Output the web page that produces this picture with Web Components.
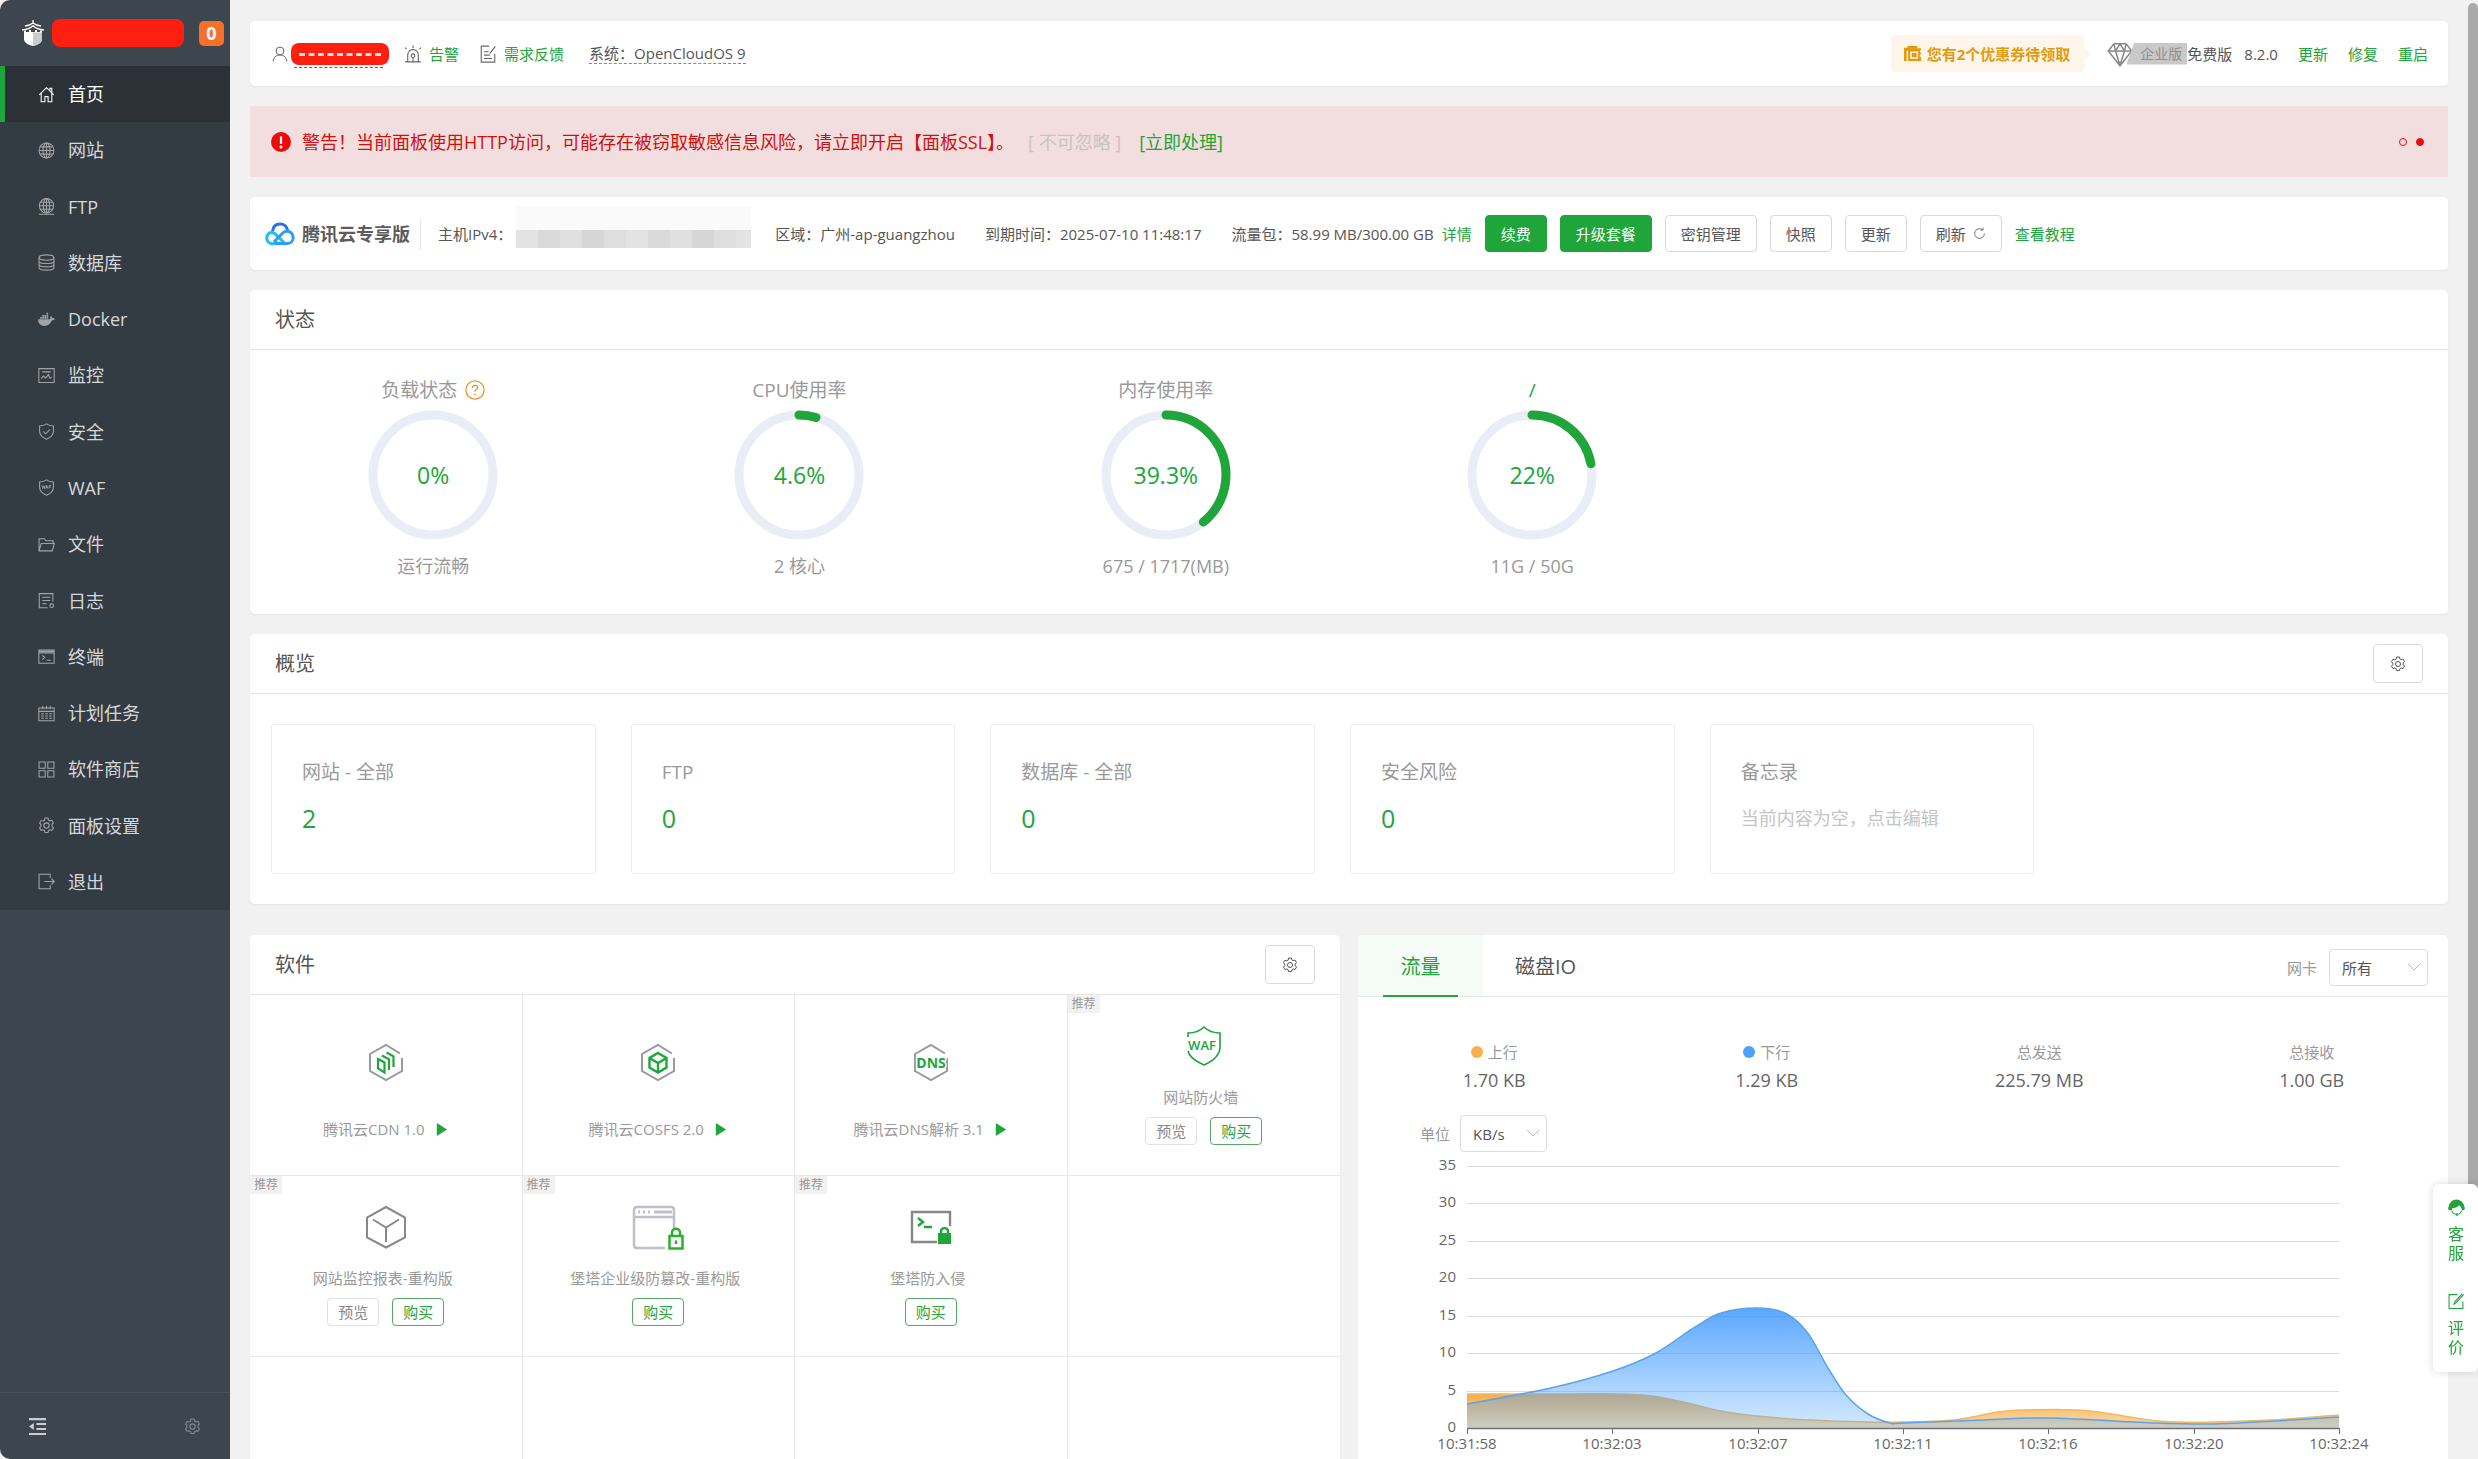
<!DOCTYPE html>
<html lang="zh-CN">
<head>
<meta charset="utf-8">
<meta name="viewport" content="width=device-width, initial-scale=1">
<title>首页</title>
<style>
  html, body { height: 100%; margin: 0; }
  body {
    --green: #20a53a; --line: #e8e8e8; --muted: #999; --text: #555;
    background: #f1f1f1; color: var(--text); overflow: hidden;
    font: 15px/24px "Open Sans", "Noto Sans CJK SC", sans-serif;
  }
</style>
</head>
<body>
<bt-app></bt-app>
<script>
const BASE = `
  *, *::before, *::after { box-sizing: border-box; }
  :host { display: block; }
  :host([hidden]) { display: none; }
  a { color: var(--green); text-decoration: none; }
  button, select { font: inherit; color: inherit; margin: 0; }
  svg { display: block; }
`;
function define(name, css, html) {
  customElements.define(name, class extends HTMLElement {
    constructor() { super(); this.attachShadow({ mode: 'open' }); }
    connectedCallback() {
      if (this.shadowRoot.childNodes.length) return;
      const body = typeof html === 'function' ? html(this) : html;
      this.shadowRoot.innerHTML = `<style>${BASE}${css}</style>${body}`;
    }
  });
}

/* ---------- icons, all on a 16 unit square unless a box is given ---------- */
const gearPath = 'M6.6 1h2.8l.5 1.9 1.3.7 1.9-.5 1.4 2.4-1.3 1.4v1.8l1.3 1.4-1.4 2.4-1.9-.5-1.3.7-.5 1.9H6.6l-.5-1.9-1.3-.7-1.9.5-1.4-2.4 1.3-1.4V7.1L1.5 5.7l1.4-2.4 1.9.5 1.3-.7z';
const hexPath = 'M35 12.5 21 4 5 13v17l16 9 16-9V17';
const ICONS = {
  home: '<path d="M1.200 8.400 8 1.600l6.800 6.800M3 7v7.800h3.500V10h3v4.800H13V7M11.200 4.600V2.200H13v4.200"/>',
  globe: '<circle cx="8" cy="8" r="7"/><ellipse cx="8" cy="8" rx="3.300" ry="7"/><path d="M8 1v14M1 8h14M2.300 4.600h11.400M2.300 11.400h11.400"/>',
  ftp: '<circle cx="8" cy="7.300" r="6.700"/><ellipse cx="8" cy="7.300" rx="3" ry="6.700"/><path d="M1.300 7.300h13.400M8 .6v13.400M2.500 4h11M2.500 10.600h11M.8 15.300h14.400"/>',
  db: '<ellipse cx="8" cy="3.300" rx="7" ry="2.500"/><path d="M1 3.300v9.400c0 1.400 3.100 2.500 7 2.500s7-1.100 7-2.500V3.300M1 6.500C1 7.900 4.100 9 8 9s7-1.100 7-2.500M1 9.600c0 1.400 3.100 2.500 7 2.500s7-1.100 7-2.500"/>',
  docker: '<path fill="currentColor" stroke="none" d="M.2 7.800h11.100c.6-.5.5-1.500.1-2.200l.7-.8c.9.600 1.200 1.300 1.200 2 .8-.2 1.700-.1 2.700.4-.5 1-1.500 1.400-2.800 1.400-1.300 3.300-3.900 5.400-7.400 5.400C2.300 14 0 11.500.2 7.800zM2 5.700h1.600v1.600H2zM4 5.700h1.600v1.600H4zM6 5.700h1.600v1.600H6zM8 5.700h1.600v1.600H8zM4 3.700h1.600v1.600H4zM6 3.700h1.600v1.600H6zM8 3.700h1.600v1.600H8zM8 1.700h1.600v1.600H8z"/>',
  monitor: '<path d="M.8 1.500h14.400v13H.8zM4 4.600h8M3 11l2.300-2.500 2 1.800L9.800 7l1.500 3.500L13 9.500"/>',
  shield: '<path d="M8 .8c1.900 1.300 4 1.900 6.500 2v5c0 3.500-2.600 5.800-6.500 7.500-3.900-1.700-6.500-4-6.500-7.500v-5c2.500-.1 4.600-.7 6.500-2zM5 8l2.200 2.200 3.900-3.900"/>',
  waf: '<path d="M8 .8c1.900 1.300 4 1.900 6.500 2v5c0 3.500-2.600 5.800-6.500 7.500-3.900-1.700-6.500-4-6.500-7.500v-5c2.500-.1 4.600-.7 6.500-2z"/><path d="M3.600 6l.8 3 .8-2.500L6 9l.8-3M7.300 9l1-3 1 3M7.600 8.200h1.500M10.500 9V6.200h2M10.500 7.600h1.600" stroke-width=".8"/>',
  folder: '<path d="M1 14V2.500h5l1.500 2h6.700V7M1 14h12.500L15.300 7H3z"/>',
  log: '<path d="M14 9V1.500H1.200v13.300H9M4 5h7.500M4 8h7.500M4 11h4"/><circle cx="12.900" cy="12.900" r="1.700"/>',
  term: '<path d="M.8 1.800h14.400v12.600H.8zM.8 4.600h14.400M.8 3.200h14.400M4 7l2.300 2L4 11M8 11.500h4"/>',
  calendar: '<path d="M.8 2.800h14.400v12H.8zM.8 6h14.400M4.500 1V4M11.500 1V4M8 1V4M3 8.300h2.500M3 10.300h2.500M3 12.400h2.500M6.800 8.300h2.500M6.800 10.300h2.500M6.800 12.400h2.500M10.500 8.300H13M10.500 10.300H13M10.500 12.400H13"/>',
  apps: '<path d="M1 1h5.800v5.800H1zM9.200 1H15v5.800H9.200zM1 9.200h5.800V15H1zM9.200 9.200H15V15H9.200z"/>',
  gear: `<path d="${gearPath}"/><circle cx="8" cy="8" r="2.500"/>`,
  exit: '<path d="M11.500 4.500V1.200H1v13.600h10.500v-3.300M6 8h9.300M12.600 5.300 15.300 8l-2.700 2.700"/>',
  collapse: '<path fill="currentColor" stroke="none" d="M0 0h16v2H0zM7 4.700h9v1.800H7zM7 9.400h9v1.800H7zM0 14h16v2H0zM0 8l4.500-3.400v6.800z"/>',
  user: '<circle cx="8" cy="5" r="3.900"/><path d="M1.200 15.500C1.500 11.500 4 9 8 9s6.500 2.500 6.800 6.500"/>',
  siren: '<path d="M3.300 14.500V8.800a4.700 4.700 0 0 1 9.400 0v5.700M1 15h14M8 2.800V.5M2.300 3.600 1 2.300M13.700 3.600 15 2.300M8 11.500v3"/><circle cx="8" cy="9.500" r="1.600"/>',
  note: '<path d="M9 1H2v14.200h12V8M4.500 6h4M4.500 9h5M4.500 12h7M14.500 1.200 9.500 7.600"/>',
  coupon: '<path fill="currentColor" stroke="none" fill-rule="evenodd" d="M0 2.500h3.300V1H13l-1 2h4v2h-1v2h1v2h-1v2h1v4H3.800V5.500H2.500V15H0zM5.800 6v7h7.500V6zM7.300 7.500H12v4H7.300z"/>',
  diamond: '<path d="M4 1.200h8L15.800 6 8 15.800.2 6zM.2 6h15.600M4 1.200 5 6l3 9.500L11 6l1-4.800M5 6l3-4.800L11 6"/>',
  refresh: '<path d="M14 8A6 6 0 1 1 11.500 3.200M9.200 3.800h3.200V.8"/>',
  edit: '<path d="M9 1.500H1v13h13V8M14.800 1.200 7.500 9.300l-1.800 1.200.7-2.200L13.300.8"/>',
  headset: '<path fill="currentColor" stroke="none" d="M8 .5a7.200 7.200 0 0 1 7.200 6.600c.9.700.9 3-.4 3.600h-1.600c-.2-2.200-1.200-3.600-2.700-4.800-1.700 1.900-4.200 2.700-6.500 2.800l-.4 2H1.200C-.1 10.100-.1 7.800.8 7.100A7.200 7.200 0 0 1 8 .5z"/><path d="M3.500 11c.8 2.200 2.400 3.500 4.500 3.500M12.800 11c-.5 1.500-1.500 2.700-2.800 3.300"/><circle cx="8.500" cy="14.500" r="1.200" fill="currentColor" stroke="none"/>',
  alert: '<circle cx="8" cy="8" r="8" fill="#ee0a0a" stroke="none"/><path d="M8 3.500v6" stroke="#fff" stroke-width="1.800"/><circle cx="8" cy="12" r="1.200" fill="#fff" stroke="none"/>',
  help: '<circle cx="8" cy="8" r="7.300"/><path d="M5.900 6.300c0-1.300.9-2.100 2.100-2.100s2.100.8 2.100 1.900c0 1.500-2.100 1.600-2.100 3.200"/><circle cx="8" cy="11.500" r=".7" fill="currentColor" stroke="none"/>',
  play: '<path fill="currentColor" stroke="none" d="M3 1l11 7-11 7z"/>',
  tower: ['0 0 24 26', '<g stroke="#fff" stroke-width="1.300"><path d="M12 0v4M4 6c3.500-.4 6-1.300 8-3 2 1.700 4.500 2.600 8 3M1 10c5-.4 8.500-1.800 11-4.200 2.500 2.400 6 3.800 11 4.200"/></g><path fill="#fff" stroke="none" d="M3 10.500h2V12h3v-2h2v2h4v-2h2v2h3v-1.500h2V19c0 3.500-4 6-9 7-5-1-9-3.500-9-7z"/><path fill="#c9cdd1" stroke="none" d="M12 12.500h9V19c0 3.500-4 6-9 7z"/>'],
  cloud: ['0 0 30 24', '<g stroke-width="3"><path stroke="#2b6ff2" d="M7.500 9.500C8 4.500 11 2 15 2s7 2.500 7.500 6.500"/><path stroke="#1fc0e4" d="M20 21.500 9.500 11.300C4.500 9 1.800 12.500 1.800 16s2.700 5.700 6 5.700c2 0 3.400-.7 4.700-2"/><path stroke="#2f9df5" d="M10 21.500h12.500c3.300 0 5.700-2.500 5.700-6s-2.700-6.200-6-6.200c-2 0-3.500.7-4.700 1.900L9 20"/></g>'],
  cdn: ['0 0 42 42', `<path stroke="#999" stroke-width="2" d="${hexPath}"/><path stroke="#20a53a" stroke-width="2.200" d="M13 18l6.500 3.500V31.500L13 27.500zM17 14.500l7 3.800V29M21.500 11.500l7 3.800V26"/>`],
  cosfs: ['0 0 42 42', `<path stroke="#999" stroke-width="2" d="${hexPath}"/><path stroke="#20a53a" stroke-width="2.400" d="M21 12l8.500 5v9.500L21 31.500l-8.500-5V17zM12.500 17l8.500 5 8.500-5M21 22v9.500"/>`],
  dns: ['0 0 42 42', `<path stroke="#999" stroke-width="2" d="${hexPath}"/><text x="21" y="26.500" text-anchor="middle" font-size="14" font-weight="700" fill="#20a53a" stroke="#fff" stroke-width="3" paint-order="stroke">DNS</text>`],
  wafbig: ['0 0 42 42', '<path stroke="#20a53a" stroke-width="1.600" d="M5 12V8c6 0 12-2 16-6 4 4 10 6 16 6v14c0 9-7 14-16 18C12 36 6 32 5 26"/><text x="19" y="24.500" text-anchor="middle" font-size="13" font-weight="600" fill="#20a53a" stroke="#fff" stroke-width="3" paint-order="stroke">WAF</text>'],
  cube: ['0 0 42 42', '<path stroke="#888" stroke-width="2" d="M21 1l19 10.500v20L21 41.500 2 31.500v-20zM8 13.500l13 8 13-8M21 21.500V36"/>'],
  tamper: ['0 0 52 44', '<g stroke="#bfbfcb" stroke-width="2.500"><path d="M33 42H5c-2 0-3-1-3-3V4c0-2 1-3 3-3h34c2 0 3 1 3 3v19M2 11h40"/><path d="M6 6h2M11 6h2M16 6h2M22 6h18" stroke-width="3"/></g><g stroke="#2eae2e" stroke-width="2.500"><path fill="#fff" d="M37.500 30h13v12.500h-13z"/><path d="M40 30v-3.500c0-5 8-5 8 0V30M44 34.500v3.500"/></g>'],
  intrude: ['0 0 42 42', '<path stroke="#888" stroke-width="2.400" d="M27 36H2V6h38v14"/><path stroke="#20a53a" stroke-width="2.400" d="M8 12l5 4-5 4M14 21h8"/><path fill="#20a53a" stroke="none" d="M28 27h13v11H28z"/><path stroke="#20a53a" stroke-width="2.400" d="M31 28v-2.500c0-4.500 7-4.500 7 0V28"/>'],
};
define('bt-icon', `
  :host { flex: none; width: 16px; height: 16px; }
  svg { width: 100%; height: 100%; overflow: visible; }`,
  el => {
    const def = ICONS[el.getAttribute('name')];
    const [box, art] = Array.isArray(def) ? def : ['0 0 16 16', def];
    return `<svg viewBox="${box}" fill="none" stroke="currentColor" stroke-width="1" aria-hidden="true">${art}</svg>`;
  });

/* ---------- controls ---------- */
define('bt-button', `
  button { height: 37px; padding: 0 15px; border: 1px solid #d9d9d9; border-radius: 4px; background: #fff; display: flex; align-items: center; gap: 7px; color: #555; white-space: nowrap; }
  :host([kind=primary]) button { background: var(--green); border-color: var(--green); color: #fff; }
  :host([kind=square]) button { width: 50px; height: 39px; padding: 0; justify-content: center; }
  :host([kind=small]) button, :host([kind=buy]) button { height: 28px; padding: 0 10px; color: #888; border-color: #e0e0e0; }
  :host([kind=buy]) button { color: var(--green); border-color: #55a868; }`,
  el => `<button type="button" aria-label="${el.getAttribute('label') || el.textContent.trim()}"><slot></slot></button>`);

define('bt-select', `
  :host { display: flex; align-items: center; gap: 10px; color: var(--muted); }
  span { position: relative; display: block; }
  select { appearance: none; height: 37px; width: var(--w, 99px); padding: 0 12px; border: 1px solid #dcdcdc; border-radius: 4px; background: #fff; color: #555; }
  svg { position: absolute; right: 7px; top: 12px; width: 14px; height: 12px; pointer-events: none; }`,
  el => `<label for="s">${el.getAttribute('label')}</label><span><select id="s"><option>${el.getAttribute('value')}</option></select>
    <svg viewBox="0 0 14 12" fill="none" stroke="#bbb"><path d="M1 3l6 6 6-6"/></svg></span>`);

/* ---------- sidebar ---------- */
define('bt-nav-item', `
  a { display: flex; align-items: center; height: 100%; gap: 13px; padding-left: 38px; color: #d5d8da; font-size: 18px; }
  bt-icon { color: #a0a4a7; width: 17px; height: 17px; }
  :host([active]) a { background: #2c3138; color: #fff; padding-left: 33px; border-left: 5px solid var(--green); }
  :host([active]) bt-icon { color: #fff; }`,
  el => `<a href="#"><bt-icon name="${el.getAttribute('icon')}"></bt-icon><slot></slot></a>`);

const NAV = [['home','首页'],['globe','网站'],['ftp','FTP'],['db','数据库'],['docker','Docker'],['monitor','监控'],['shield','安全'],['waf','WAF'],['folder','文件'],['log','日志'],['term','终端'],['calendar','计划任务'],['apps','软件商店'],['gear','面板设置'],['exit','退出']];
define('bt-sidebar', `
  :host { display: flex; flex-direction: column; background: #3d454e; border-radius: 10px 0 0 10px; }
  header { height: 66px; display: flex; align-items: center; padding: 0 6px 0 21px; }
  .logo { width: 24px; height: 26px; }
  .name { width: 132px; height: 28px; margin-left: 7px; border-radius: 8px; background: #ff1f10; }
  .badge { margin-left: auto; width: 25px; height: 25px; border-radius: 5px; background: #f7702b; color: #fff; font-weight: 700; font-size: 18px; text-align: center; }
  nav { display: grid; grid-auto-rows: 1fr; height: 844px; background: #343c43; }
  footer { margin-top: auto; height: 67px; border-top: 1px solid #48505a; padding: 0 29px; display: flex; align-items: center; justify-content: space-between; color: #c9ced4; }
  footer bt-icon { width: 17px; height: 17px; }
  footer bt-icon + bt-icon { color: #868c92; }`,
  `<header><bt-icon class="logo" name="tower"></bt-icon><div class="name"></div><div class="badge">0</div></header>
   <nav>${NAV.map(([i, t], n) => `<bt-nav-item icon="${i}"${n ? '' : ' active'}>${t}</bt-nav-item>`).join('')}</nav>
   <footer><bt-icon name="collapse"></bt-icon><bt-icon name="gear"></bt-icon></footer>`);

/* ---------- panels ---------- */
define('bt-panel', `
  :host { background: #fff; border-radius: 5px; box-shadow: 0 1px 2px #0000000d; }
  header { height: 60px; padding: 0 25px; display: flex; align-items: center; justify-content: space-between; border-bottom: 1px solid var(--line); }
  h2 { margin: 0; font-size: 20px; font-weight: 400; color: #555; }`,
  el => `<header><h2>${el.getAttribute('heading')}</h2><slot name="tool"></slot></header><slot></slot>`);

define('bt-topbar', `
  :host { display: flex; align-items: center; height: 65px; padding: 0 20px 0 22px; background: #fff; border-radius: 5px; box-shadow: 0 1px 2px #0000000d; white-space: nowrap; color: #555; }
  .group { display: flex; align-items: center; }
  .left > * + *, .links > * + * { margin-left: 20px; }
  .left bt-icon { color: #666; width: 18px; height: 18px; margin-right: 7px; }
  .left .user bt-icon { margin-right: 3px; width: 16px; }
  .mask { width: 98px; height: 22px; border-radius: 8px; background: #ff1f10; position: relative; }
  .mask::before { content: ""; position: absolute; left: 8px; right: 8px; top: 10px; border-top: 3px dashed #ffe0da; }
  .mask::after { content: ""; position: absolute; left: 3px; right: 6px; bottom: -3px; border-bottom: 1px dashed #4f7a35; }
  .user.group { margin-right: -5px; }
  .sys { display: block; line-height: 19px; border-bottom: 1px dashed #888; margin-left: 25px; }
  .right { margin-left: auto; }
  .coupon { position: relative; height: 37px; padding: 0 14px 0 13px; gap: 6px; background: #fef6ea; border-radius: 4px; color: #e39a10; font-weight: 700; }
  .coupon::after { content: ""; position: absolute; left: 100%; top: 12px; border: 7px solid transparent; border-left-color: #fef6ea; }
  .coupon bt-icon { width: 17px; height: 17px; }
  .plan { margin: 0 20px 0 22px; }
  .plan bt-icon { width: 28px; height: 24px; color: #888; }
  .tag { height: 22px; line-height: 22px; padding: 0 5px 0 14px; margin-left: -8px; font-size: 14px; color: #8f8f8f; background: #c9c9c9; clip-path: polygon(8px 0, 100% 0, 100% 100%, 0 100%); }
  .ver { margin-left: 12px; }`,
  `<div class="group left">
     <span class="group user"><bt-icon name="user"></bt-icon><span class="mask"></span></span>
     <a class="group" href="#"><bt-icon name="siren"></bt-icon>告警</a>
     <a class="group" href="#"><bt-icon name="note"></bt-icon>需求反馈</a>
     <span class="sys">系统：OpenCloudOS 9</span>
   </div>
   <div class="group right">
     <a class="group coupon" href="#"><bt-icon name="coupon"></bt-icon>您有2个优惠券待领取</a>
     <span class="group plan"><bt-icon name="diamond"></bt-icon><span class="tag">企业版</span><span>免费版</span><span class="ver">8.2.0</span></span>
     <span class="group links"><a href="#">更新</a><a href="#">修复</a><a href="#">重启</a></span>
   </div>`);

define('bt-warning', `
  :host { display: flex; align-items: center; height: 71px; padding: 0 24px 0 21px; background: #f2dede; color: #d0100f; font-size: 18px; white-space: nowrap; }
  bt-icon { width: 20px; height: 20px; margin-right: 11px; }
  .ignore { color: #c9c2c2; margin: 0 18px 0 14px; }
  .dots { margin-left: auto; display: flex; gap: 9px; }
  .dots i { width: 8px; height: 8px; border: 1px solid #ee0a0a; border-radius: 50%; }
  .dots i + i { background: #ee0a0a; }`,
  `<bt-icon name="alert"></bt-icon><span>警告！当前面板使用HTTP访问，可能存在被窃取敏感信息风险，请立即开启【面板SSL】。</span>
   <span class="ignore">[ 不可忽略 ]</span><a href="#">[立即处理]</a><span class="dots"><i></i><i></i></span>`);

define('bt-cloudbar', `
  :host { display: flex; align-items: center; height: 73px; padding: 0 15px; background: #fff; border-radius: 5px; box-shadow: 0 1px 2px #0000000d; white-space: nowrap; color: #555; }
  .logo { width: 30px; height: 24px; margin-right: 7px; }
  b { font-size: 18px; padding-right: 10px; margin-right: 17px; line-height: 32px; border-right: 1px solid #e6e6e6; color: #5c5c5c; }
  .mask { width: 235px; height: 42px; margin: 9px 24px 0 4px; align-self: flex-start; padding-top: 24px; background: #fafafa; }
  .mask::after { content: ""; display: block; height: 18px; background: repeating-linear-gradient(90deg, #e3e3e3 0 22px, #dadada 22px 44px, #e0e0e0 44px 66px, #d6d6d6 66px 88px, #dedede 88px 110px); }
  .item { margin-right: 30px; }
  .flow { margin-right: 8px; }
  .buttons { display: flex; align-items: center; gap: 13px; margin-left: 13px; }
  .buttons bt-icon { width: 13px; height: 13px; }`,
  `<bt-icon class="logo" name="cloud"></bt-icon><b>腾讯云专享版</b>
   <span>主机IPv4：</span><span class="mask"></span>
   <span class="item">区域：广州-ap-guangzhou</span><span class="item">到期时间：2025-07-10 11:48:17</span>
   <span class="flow">流量包：58.99 MB/300.00 GB</span><a href="#">详情</a>
   <div class="buttons"><bt-button kind="primary">续费</bt-button><bt-button kind="primary">升级套餐</bt-button><bt-button>密钥管理</bt-button><bt-button>快照</bt-button><bt-button>更新</bt-button><bt-button>刷新 <bt-icon name="refresh"></bt-icon></bt-button><a href="#">查看教程</a></div>`);

define('bt-gauge', `
  :host { display: flex; flex-direction: column; align-items: center; font-size: 18px; color: var(--muted); }
  .title { display: flex; align-items: center; height: 26px; gap: 8px; font-size: 19px; }
  .ring { display: grid; place-items: center; margin: 7px 0 14px; }
  .ring > * { grid-area: 1 / 1; }
  svg { width: 130px; height: 130px; }
  .val { color: var(--green); font-size: 23px; line-height: 30px; }
  ::slotted(a) { color: var(--green); text-decoration: none; }
  ::slotted(bt-icon) { width: 20px; height: 20px; color: #e8962c; }`,
  el => {
    const v = +el.getAttribute('value');
    return `<div class="title"><slot></slot></div><div class="ring"><svg viewBox="0 0 130 130" fill="none">
      <circle cx="65" cy="65" r="60" stroke="#eaedf6" stroke-width="9"/>
      ${v ? `<circle cx="65" cy="65" r="60" stroke="#20a53a" stroke-width="9" stroke-linecap="round" pathLength="100" stroke-dasharray="${v} 100" transform="rotate(-90 65 65)"/>` : ''}
      </svg><span class="val">${v}%</span></div><div>${el.getAttribute('note')}</div>`;
  });

define('bt-stat', `
  :host { border: 1px solid #ececec; border-radius: 3px; height: 150px; padding: 33px 30px; }
  h3 { margin: 0; font-weight: 400; font-size: 19px; line-height: 28px; color: var(--muted); }
  .v { margin-top: 15px; font-size: 25px; line-height: 34px; color: var(--green); }
  :host([memo]) .v { font-size: 18px; color: #c4c4c4; }`,
  el => `<h3>${el.getAttribute('heading')}</h3><div class="v"><slot></slot></div>`);

define('bt-app-tile', `
  :host { position: relative; display: flex; flex-direction: column; align-items: center; height: 181px; padding-top: 46px; border-right: 1px solid var(--line); border-bottom: 1px solid var(--line); color: var(--muted); }
  .ico { width: 42px; height: 42px; }
  .wide { width: 52px; height: 44px; }
  .name { display: flex; align-items: center; gap: 9px; margin-top: 34px; }
  .name bt-icon { color: var(--green); width: 15px; height: 15px; }
  :host([tag]) { padding-top: 30px; }
  :host([tag]) .name { margin-top: 18px; padding-right: 6px; }
  :host([tag]) .wide { margin-bottom: -2px; }
  .tag { position: absolute; left: 0; top: 0; padding: 0 4px; line-height: 18px; font-size: 12px; background: #f1f1f1; }
  .act { display: flex; gap: 13px; margin-top: 8px; }`,
  el => {
    const icon = el.getAttribute('icon'), tag = el.getAttribute('tag');
    if (!icon) return '';
    return `${tag ? `<span class="tag">${tag}</span>` : ''}<bt-icon class="ico${icon === 'tamper' ? ' wide' : ''}" name="${icon}"></bt-icon>
      <div class="name"><span>${el.getAttribute('name')}</span>${tag ? '' : '<bt-icon name="play"></bt-icon>'}</div><div class="act"><slot></slot></div>`;
  });

define('bt-software', `
  .grid { display: grid; grid-template-columns: repeat(4, 1fr); }
  bt-app-tile:nth-child(4n) { border-right: 0; }`,
  `<bt-panel heading="软件"><bt-button slot="tool" kind="square" label="设置"><bt-icon name="gear"></bt-icon></bt-button>
   <div class="grid">
    <bt-app-tile icon="cdn" name="腾讯云CDN 1.0"></bt-app-tile>
    <bt-app-tile icon="cosfs" name="腾讯云COSFS 2.0"></bt-app-tile>
    <bt-app-tile icon="dns" name="腾讯云DNS解析 3.1"></bt-app-tile>
    <bt-app-tile icon="wafbig" name="网站防火墙" tag="推荐"><bt-button kind="small">预览</bt-button><bt-button kind="buy">购买</bt-button></bt-app-tile>
    <bt-app-tile icon="cube" name="网站监控报表-重构版" tag="推荐"><bt-button kind="small">预览</bt-button><bt-button kind="buy">购买</bt-button></bt-app-tile>
    <bt-app-tile icon="tamper" name="堡塔企业级防篡改-重构版" tag="推荐"><bt-button kind="buy">购买</bt-button></bt-app-tile>
    <bt-app-tile icon="intrude" name="堡塔防入侵" tag="推荐"><bt-button kind="buy">购买</bt-button></bt-app-tile>
    <bt-app-tile></bt-app-tile><bt-app-tile></bt-app-tile><bt-app-tile></bt-app-tile><bt-app-tile></bt-app-tile><bt-app-tile></bt-app-tile>
   </div></bt-panel>`);

/* ---------- traffic chart ---------- */
const DOWN = [[109,249],[193,233],[255,216],[298,198],[337,172],[363,158],[399,153],[427,158],[449,177],[470,213],[488,240],[510,259],[532,268],[545,268],[625,265],[690,263],[798,268],[855,269],[899,267],[981,262]];
const UP = [[109,239],[193,239],[258,239],[294,241],[330,248],[363,256],[399,261],[452,265],[510,267],[545,267],[596,265],[640,257],[668,255],[719,255],[747,258],[791,265],[819,267],[855,267],[913,265],[981,260]];
function spline(p) {
  let d = `M${p[0]}`;
  for (let i = 0; i < p.length - 1; i++) {
    const a = p[i - 1] || p[i], b = p[i], c = p[i + 1], e = p[i + 2] || c;
    d += `C${b[0] + (c[0] - a[0]) / 6},${b[1] + (c[1] - a[1]) / 6} ${c[0] - (e[0] - b[0]) / 6},${c[1] - (e[1] - b[1]) / 6} ${c}`;
  }
  return d;
}
const TIMES = ['10:31:58','10:32:03','10:32:07','10:32:11','10:32:16','10:32:20','10:32:24'];
define('bt-chart', `svg { width: 100%; overflow: visible; } text { font-size: 15px; fill: #666; }`,
  () => {
    let s = '';
    for (let i = 0; i <= 7; i++) {
      const y = Math.round(273 - 262 * i / 7);
      if (i) s += `<path d="M109 ${y}.5H981" stroke="#d9dbe0"/>`;
      s += `<text x="98" y="${y + 4}" text-anchor="end">${i * 5}</text>`;
    }
    const area = p => spline(p) + 'V273H109Z';
    let x = '';
    TIMES.forEach((t, i) => {
      const px = Math.round(109 + 872 * i / 6);
      x += `<path d="M${px}.5 273v6" stroke="#6e7079"/><text x="${px}" y="294" text-anchor="middle">${t}</text>`;
    });
    return `<svg viewBox="0 0 1090 305"><defs>
      <linearGradient id="b" x1="0" y1="0" x2="0" y2="1"><stop stop-color="#3c96ff" stop-opacity=".85"/><stop offset="1" stop-color="#4ea5ff" stop-opacity=".25"/></linearGradient>
      <linearGradient id="o" x1="0" y1="0" x2="0" y2="1"><stop stop-color="#f7a93c" stop-opacity=".95"/><stop offset="1" stop-color="#f7a93c" stop-opacity=".4"/></linearGradient></defs>
      ${s}<path d="${area(UP)}" fill="url(#o)"/><path d="${spline(UP)}" fill="none" stroke="#f0b860" stroke-width="1.500"/>
      <path d="${area(DOWN)}" fill="url(#b)"/><path d="${spline(DOWN)}" fill="none" stroke="#5aa5ea" stroke-width="1.500"/>
      <path d="M109 273.500H982" stroke="#6e7079" stroke-width="1.500"/>${x}</svg>`;
  });

define('bt-traffic', `
  :host { background: #fff; border-radius: 5px; overflow: hidden; }
  header { display: flex; align-items: stretch; height: 62px; border-bottom: 1px solid var(--line); padding-right: 20px; }
  .tab { width: 125px; display: flex; align-items: center; justify-content: center; border: 0; background: none; padding: 3px 0 0; font-size: 20px; color: #555; position: relative; }
  .tab[aria-selected=true] { background: #f5fbf7; color: var(--green); }
  .tab[aria-selected=true]::after { content: ""; position: absolute; left: 25px; right: 25px; bottom: -1px; height: 2px; background: var(--green); }
  header bt-select { margin-left: auto; padding-top: 4px; gap: 12px; }
  dl { display: grid; grid-template-columns: repeat(4, 1fr); margin: 43px 0 21px; text-align: center; }
  dt { color: var(--muted); display: flex; align-items: center; justify-content: center; gap: 5px; }
  dd { margin: 2px 0 0; font-size: 18px; line-height: 28px; color: #666; }
  .dot { width: 12px; height: 12px; border-radius: 50%; }
  .unit { --w: 87px; padding-left: 62px; margin-bottom: 3px; }`,
  `<header role="tablist"><button class="tab" role="tab" aria-selected="true">流量</button><button class="tab" role="tab" aria-selected="false">磁盘IO</button><bt-select label="网卡" value="所有"></bt-select></header>
   <dl><div><dt><span class="dot" style="background:#f7b04c"></span>上行</dt><dd>1.70 KB</dd></div>
   <div><dt><span class="dot" style="background:#4ba2fa"></span>下行</dt><dd>1.29 KB</dd></div>
   <div><dt>总发送</dt><dd>225.79 MB</dd></div><div><dt>总接收</dt><dd>1.00 GB</dd></div></dl>
   <bt-select class="unit" label="单位" value="KB/s"></bt-select><bt-chart></bt-chart>`);

define('bt-floatbar', `
  :host { position: fixed; right: 0; top: 1184px; width: 45px; height: 188px; padding: 15px 0 15px 1px; background: #fff; border-radius: 6px; box-shadow: 0 0 8px #00000026; display: flex; flex-direction: column; justify-content: space-between; }
  a { display: flex; flex-direction: column; align-items: center; gap: 9px; font-size: 16px; line-height: 19px; }
  span { width: 16px; }
  bt-icon { width: 17px; height: 17px; }`,
  `<a href="#"><bt-icon name="headset"></bt-icon><span>客服</span></a><a href="#"><bt-icon name="edit"></bt-icon><span>评价</span></a>`);

define('bt-app', `
  :host { display: flex; height: 100vh; overflow: hidden; }
  bt-sidebar { flex: none; width: 230px; }
  main { flex: 1; min-width: 0; padding: 21px 20px 0; display: flex; flex-direction: column; gap: 20px; height: 100vh; overflow: hidden; }
  main > * { flex: none; }
  .scroll { flex: none; width: 10px; padding-top: 3px; }
  .scroll i { display: block; height: 1190px; border-radius: 5px; background: #a9a9a9; }
  .gauges { display: grid; grid-template-columns: repeat(6, 1fr); padding: 27px 0 36px; }
  .stats { display: grid; grid-template-columns: repeat(6, 1fr); gap: 35px; padding: 30px 54px 30px 21px; }
  .cols { display: grid; grid-template-columns: 1fr 1fr; gap: 18px; margin-top: 11px; }`,
  `<bt-sidebar></bt-sidebar>
   <main>
    <bt-topbar></bt-topbar><bt-warning></bt-warning><bt-cloudbar></bt-cloudbar>
    <bt-panel heading="状态"><div class="gauges">
      <bt-gauge value="0" note="运行流畅">负载状态<bt-icon name="help"></bt-icon></bt-gauge>
      <bt-gauge value="4.6" note="2 核心">CPU使用率</bt-gauge>
      <bt-gauge value="39.3" note="675 / 1717(MB)">内存使用率</bt-gauge>
      <bt-gauge value="22" note="11G / 50G"><a href="#">/</a></bt-gauge>
    </div></bt-panel>
    <bt-panel heading="概览"><bt-button slot="tool" kind="square" label="设置"><bt-icon name="gear"></bt-icon></bt-button><div class="stats">
      <bt-stat heading="网站 - 全部">2</bt-stat><bt-stat heading="FTP">0</bt-stat><bt-stat heading="数据库 - 全部">0</bt-stat>
      <bt-stat heading="安全风险">0</bt-stat><bt-stat heading="备忘录" memo>当前内容为空，点击编辑</bt-stat>
    </div></bt-panel>
    <div class="cols"><bt-software></bt-software><bt-traffic></bt-traffic></div>
   </main>
   <div class="scroll"><i></i></div><bt-floatbar></bt-floatbar>`);
</script>
</body>
</html>
